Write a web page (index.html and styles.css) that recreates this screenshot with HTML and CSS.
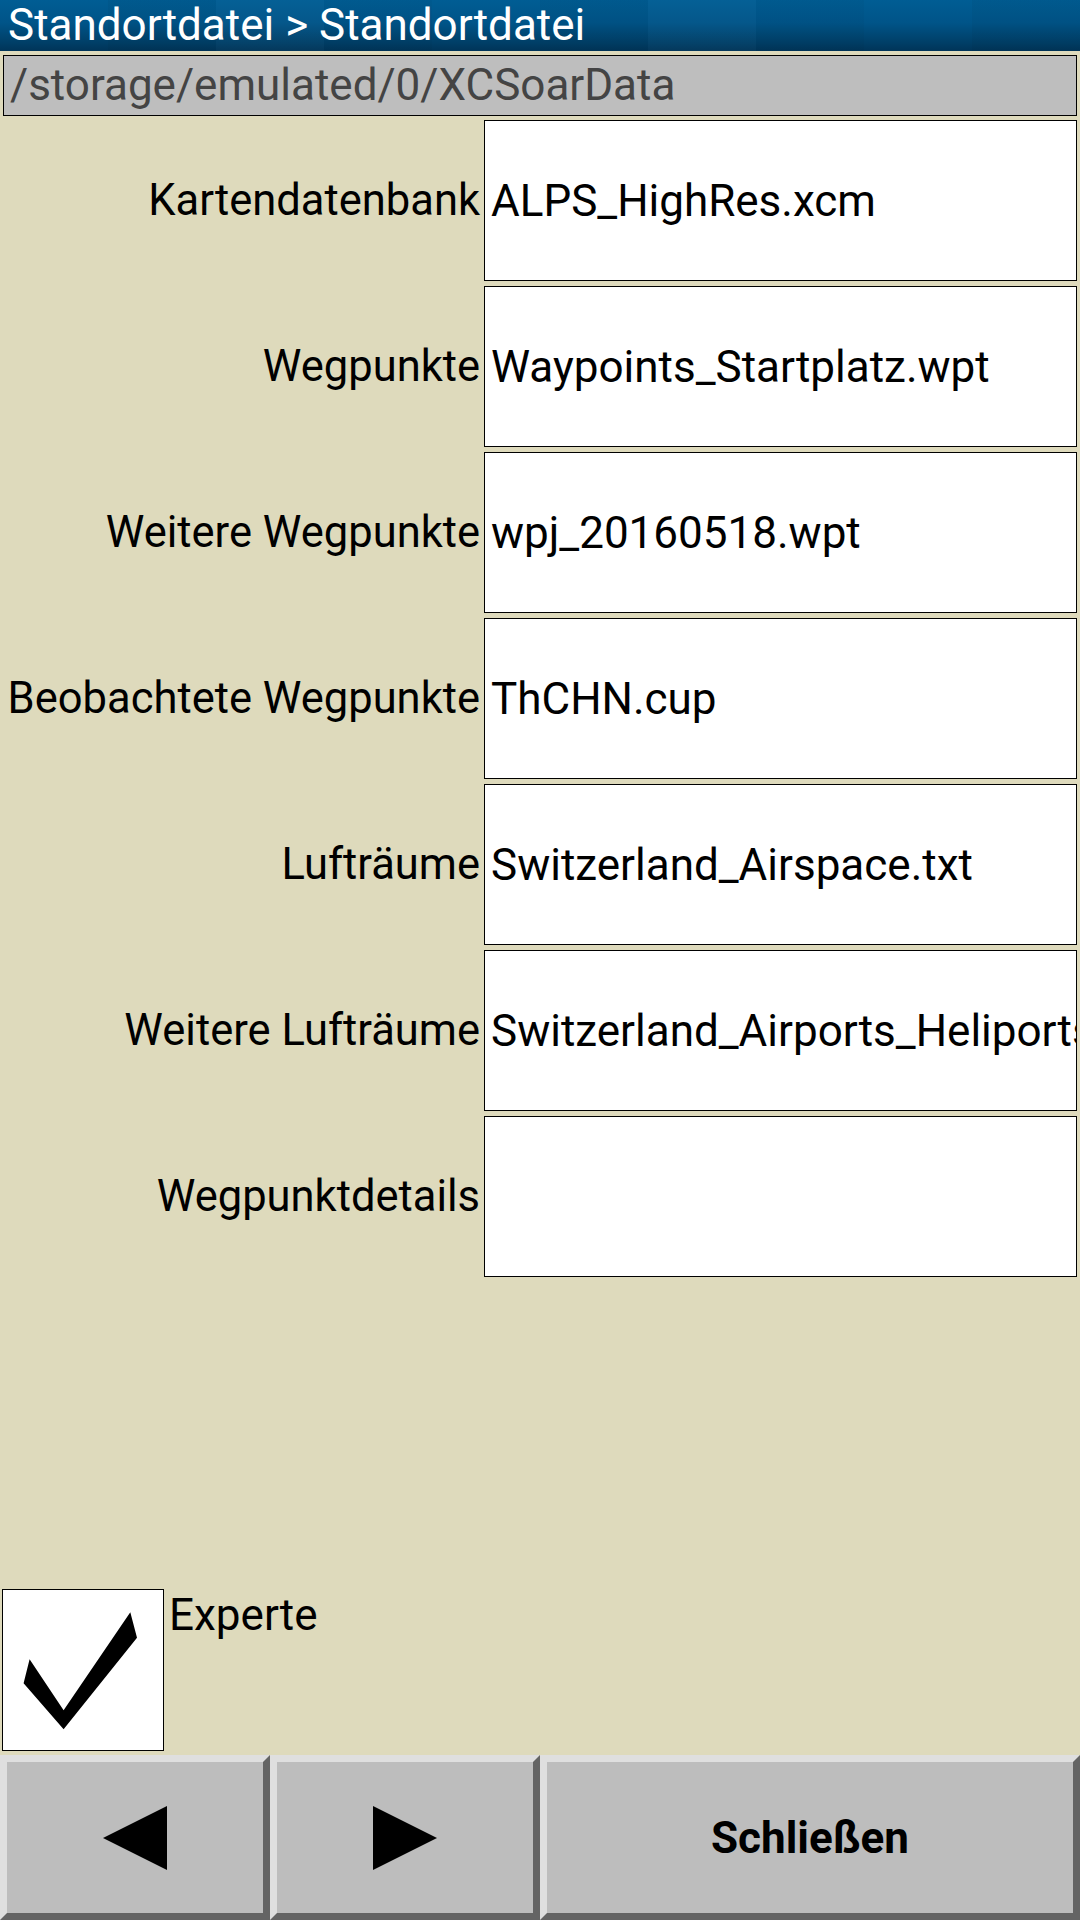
FILE: index.html
```html
<!DOCTYPE html>
<html lang="de">
<head>
<meta charset="utf-8">
<title>Standortdatei</title>
<link rel="stylesheet" href="styles.css">
</head>
<body>
<div class="screen">
  <header class="titlebar">
    <span class="title">Standortdatei &gt; Standortdatei</span>
  </header>
  <div class="pathbar">/storage/emulated/0/XCSoarData</div>
  <div class="rows">
    <div class="row"><div class="label">Kartendatenbank</div><div class="field">ALPS_HighRes.xcm</div></div>
    <div class="row"><div class="label">Wegpunkte</div><div class="field">Waypoints_Startplatz.wpt</div></div>
    <div class="row"><div class="label">Weitere Wegpunkte</div><div class="field">wpj_20160518.wpt</div></div>
    <div class="row"><div class="label">Beobachtete Wegpunkte</div><div class="field">ThCHN.cup</div></div>
    <div class="row"><div class="label">Lufträume</div><div class="field">Switzerland_Airspace.txt</div></div>
    <div class="row"><div class="label">Weitere Lufträume</div><div class="field">Switzerland_Airports_Heliports.txt</div></div>
    <div class="row"><div class="label">Wegpunktdetails</div><div class="field"></div></div>
  </div>
  <div class="spacer"></div>
  <div class="expert">
    <div class="checkbox">
      <svg class="check" width="160" height="160" viewBox="0 0 160 160">
        <polygon points="26.6,69.3 20.6,93.3 60.6,139.3 134,47.7 127.3,22.3 60.6,120.3" fill="#000"/>
      </svg>
    </div>
    <span class="expert-label">Experte</span>
  </div>
  <div class="buttons">
    <div class="btn btn-half">
      <svg width="64" height="64" viewBox="0 0 64 64"><polygon points="0,32 64,0 64,64" fill="#000"/></svg>
    </div>
    <div class="btn btn-half">
      <svg width="64" height="64" viewBox="0 0 64 64"><polygon points="0,0 64,32 0,64" fill="#000"/></svg>
    </div>
    <div class="btn btn-wide"><span class="btn-text">Schließen</span></div>
  </div>
</div>
</body>
</html>
```

FILE: styles.css
```css
html, body {
  margin: 0;
  padding: 0;
}

body {
  width: 1080px;
  height: 1920px;
  background: #dedabc;
  font-family: Roboto, "Liberation Sans", sans-serif;
  overflow: hidden;
}

.screen {
  width: 1080px;
  height: 1920px;
  display: flex;
  flex-direction: column;
}

.titlebar {
  height: 51px;
  flex: 0 0 51px;
  display: flex;
  align-items: center;
  padding-left: 8px;
  background:
    repeating-linear-gradient(90deg,
      rgba(255,255,255,0.00) 0px, rgba(255,255,255,0.00) 108px,
      rgba(0,0,0,0.04) 108px, rgba(0,0,0,0.04) 216px,
      rgba(255,255,255,0.02) 216px, rgba(255,255,255,0.02) 324px,
      rgba(0,0,0,0.03) 324px, rgba(0,0,0,0.03) 432px),
    linear-gradient(180deg, #005d94 0%, #005488 45%, #003e66 85%, #003458 100%);
}

.title {
  color: #ffffff;
  font-size: 44px;
  line-height: 51px;
  white-space: nowrap;
}

.pathbar {
  margin: 4px 3px 0 3px;
  height: 59px;
  border: 1px solid #000;
  background: #bebebe;
  color: #444444;
  font-size: 44px;
  line-height: 59px;
  padding-left: 6px;
  white-space: nowrap;
  overflow: hidden;
}

.rows {
  margin-top: 4px;
  display: flex;
  flex-direction: column;
  gap: 5px;
}

.row {
  display: grid;
  grid-template-columns: 484px 593px;
  height: 161px;
}

.label {
  padding-right: 4px;
  font-size: 43.5px;
  color: #000;
  display: flex;
  align-items: center;
  justify-content: flex-end;
  white-space: nowrap;
}

.field {
  background: #fff;
  border: 1px solid #000;
  font-size: 44px;
  color: #000;
  padding-left: 6px;
  display: flex;
  align-items: center;
  white-space: nowrap;
  overflow: hidden;
}

.spacer {
  flex: 1 1 auto;
}

.expert {
  display: flex;
  align-items: flex-start;
  padding-left: 2px;
  margin-bottom: 4px;
}

.checkbox {
  width: 160px;
  height: 160px;
  border: 1px solid #000;
  background: #fff;
}

.check {
  display: block;
}

.expert-label {
  font-size: 44px;
  line-height: 52px;
  margin-left: 5px;
  color: #000;
}

.buttons {
  display: flex;
  height: 165px;
  flex: 0 0 165px;
}

.btn {
  box-sizing: border-box;
  height: 165px;
  background: #bdbdbd;
  border-style: solid;
  border-width: 7px;
  border-color: #dfdfdf #646464 #646464 #dfdfdf;
  display: flex;
  align-items: center;
  justify-content: center;
}

.btn-half {
  width: 270px;
}

.btn-wide {
  width: 540px;
}

.btn-text {
  font-size: 44px;
  font-weight: bold;
  color: #000;
}
```
